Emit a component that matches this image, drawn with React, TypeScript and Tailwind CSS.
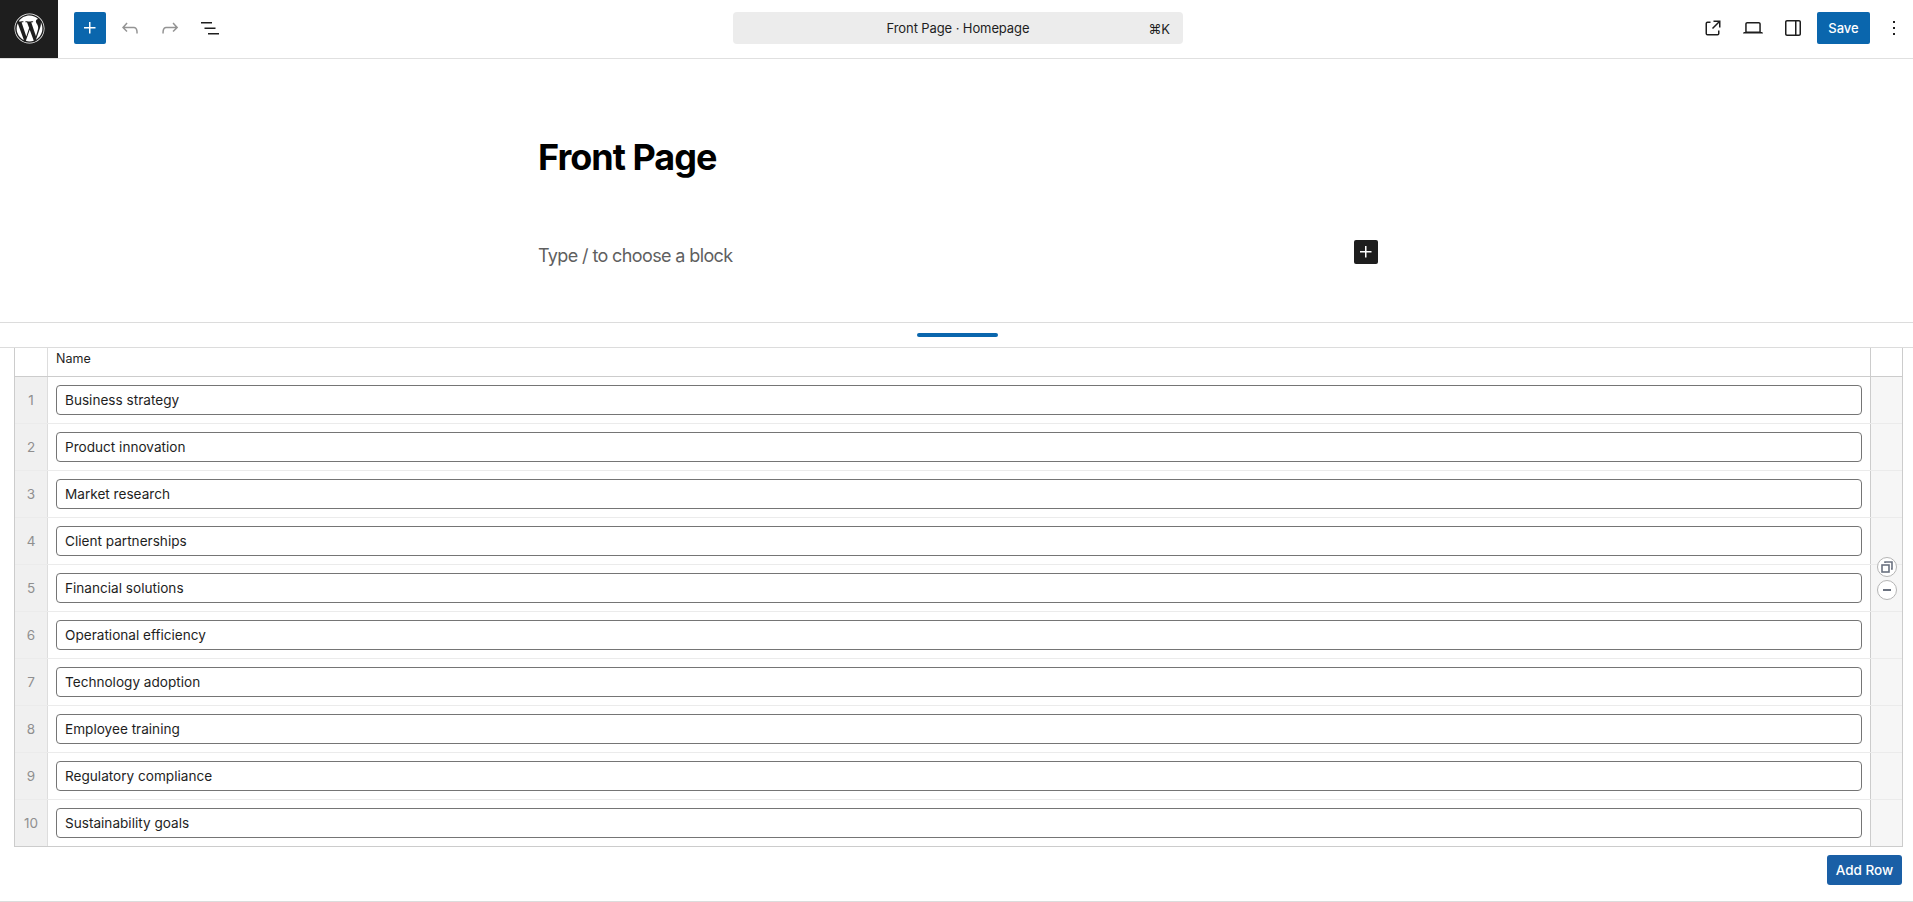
import React from "react";
import { FaWordpress } from "react-icons/fa";

const I = ({ d, className = "" }: { d: string; className?: string }) => (
  <svg viewBox="0 0 24 24" width="24" height="24" fill="currentColor" className={className}>
    <path d={d} />
  </svg>
);

const plus = "M11 12.5V17.5H12.5V12.5H17.5V11H12.5V6H11V11H6V12.5H11Z";
const undo = "M18.3 11.7c-.6-.6-1.4-.9-2.3-.9H6.7l2.9-3.3-1.1-1-4.5 5L8.5 16l1-1-2.7-2.7H16c.5 0 .9.2 1.3.5 1 1 1 3.4 1 4.5v.3h1.5v-.2c0-1.5 0-4.3-1.5-5.7z";
const redo = "M15.6 6.5l-1.1 1 2.9 3.3H8c-.9 0-1.7.3-2.3.9-1.4 1.5-1.4 4.2-1.4 5.6v.2h1.5v-.3c0-1.1 0-3.5 1-4.5.3-.3.7-.5 1.3-.5h9.2L14.5 15l1.1 1.1 4.6-4.6-4.6-5z";
const listView = "M3 6h11v1.5H3V6Zm3.5 5.5h11V13h-11v-1.5ZM21 17H10v1.5h11V17Z";
const external = "M19.5 4.5h-7V6h4.44l-5.97 5.97 1.06 1.06L18 7.06v4.44h1.5v-7Zm-13 1a2 2 0 0 0-2 2v10a2 2 0 0 0 2 2h10a2 2 0 0 0 2-2v-3H17v3a.5.5 0 0 1-.5.5h-10a.5.5 0 0 1-.5-.5v-10a.5.5 0 0 1 .5-.5h3V5.5h-3Z";
const laptop = "M20.5 16h-.7V8c0-1.1-.9-2-2-2H6.2c-1.1 0-2 .9-2 2v8h-.7c-.8 0-1.5.7-1.5 1.5h20c0-.8-.7-1.5-1.5-1.5zM5.7 8c0-.3.2-.5.5-.5h11.6c.3 0 .5.2.5.5v7.6H5.7V8z";
const sidebar = "M18 4H6c-1.1 0-2 .9-2 2v12c0 1.1.9 2 2 2h12c1.1 0 2-.9 2-2V6c0-1.1-.9-2-2-2zm-4 14.5H6c-.3 0-.5-.2-.5-.5V6c0-.3.2-.5.5-.5h8v13zm4.5-.5c0 .3-.2.5-.5.5h-2.5v-13H18c.3 0 .5.2.5.5v12z";
const more = "M13 19h-2v-2h2v2zm0-6h-2v-2h2v2zm0-6h-2V5h2v2z";

const rows = [
  "Business strategy",
  "Product innovation",
  "Market research",
  "Client partnerships",
  "Financial solutions",
  "Operational efficiency",
  "Technology adoption",
  "Employee training",
  "Regulatory compliance",
  "Sustainability goals",
];

export default function App() {
  return (
    <div className="h-[902px] w-[1913px] overflow-hidden bg-white font-['Inter',sans-serif] text-[#1e1e1e] flex flex-col">
      <header className="h-[59px] shrink-0 flex items-center pb-[2px] border-b border-[#e0e0e0]">
        <div className="w-[58px] h-[58px] -mb-[2px] pb-[2px] bg-[#1e1e1e] flex items-center justify-center text-white self-start">
          <FaWordpress size={31} />
        </div>
        <div className="w-[16px]" />
        <div className="w-[32px] h-[32px] rounded-[2px] bg-[#0a66ad] text-white flex items-center justify-center">
          <I d={plus} />
        </div>
        <div className="flex items-center gap-[8px] ml-[8px] text-[#949494]">
          <div className="w-[32px] h-[32px] flex items-center justify-center"><I d={undo} /></div>
          <div className="w-[32px] h-[32px] flex items-center justify-center"><I d={redo} /></div>
          <div className="w-[32px] h-[32px] flex items-center justify-center text-[#1e1e1e]"><I d={listView} /></div>
        </div>
        <div className="ml-[507px] w-[450px] h-[32px] pt-[1px] rounded-[4px] bg-[#ececec] flex items-center text-[13px] tracking-[-0.1px] relative">
          <span className="w-full text-center">Front Page · Homepage</span>
          <span className="absolute right-[13px] top-[8px]">⌘K</span>
        </div>
        <div className="ml-auto flex items-center gap-[8px]">
          <div className="w-[32px] h-[32px] flex items-center justify-center"><I d={external} /></div>
          <div className="w-[32px] h-[32px] flex items-center justify-center"><I d={laptop} /></div>
          <div className="w-[32px] h-[32px] flex items-center justify-center"><I d={sidebar} /></div>
        </div>
        <div className="ml-[8px] w-[53px] h-[32px] pt-[1px] rounded-[2px] bg-[#0a66ad] text-white text-[13px] font-medium flex items-center justify-center">Save</div>
        <div className="ml-[10px] mr-[5px] w-[28px] h-[32px] flex items-center justify-center"><I d={more} /></div>
      </header>

      <main className="h-[264px] shrink-0 border-b border-[#dcdcdc] pl-[538px]">
        <h1 className="mt-[75px] text-[36px] leading-[46px] font-bold tracking-[-1px] text-black">Front Page</h1>
        <div className="mt-[60px] w-[840px] h-[30px] flex items-center justify-between">
          <span className="text-[18px] tracking-[-0.62px] text-[#5f5f5f]">Type / to choose a block</span>
          <span className="w-[24px] h-[24px] rounded-[2px] bg-[#1e1e1e] text-white flex items-center justify-center -mt-[6px]">
            <svg viewBox="0 0 24 24" width="24" height="24" fill="currentColor"><path d={plus} /></svg>
          </span>
        </div>
      </main>

      <div className="h-[25px] shrink-0 border-b border-[#dcdcdc] flex items-center justify-center">
        <div className="w-[81px] h-[4px] rounded-[2px] bg-[#0a66ad] -mt-[1px] ml-[1px]" />
      </div>

      <section className="ml-[14px] mr-[10px] border-x border-b border-[#ccc]">
        <div className="h-[29px] flex border-b border-[#ccc]">
          <div className="w-[33px] border-r border-[#ddd]" />
          <div className="flex-1 px-[8px] text-[12.5px] leading-[22px]">Name</div>
          <div className="w-[32px] border-l border-[#ccc]" />
        </div>
        {rows.map((r, i) => (
          <div key={r} className={`flex ${i < 9 ? "h-[47px] border-b border-[#ebebeb]" : "h-[46px]"}`}>
            <div className="w-[33px] bg-[#f0f0f0] border-r border-[#ddd] flex items-center justify-center text-[13.5px] text-[#8f8f8f]">{i + 1}</div>
            <div className="flex-1 flex items-center px-[8px]">
              <div className="w-full h-[30px] rounded-[4px] border border-[#757575] px-[8px] flex items-center text-[13.6px]">{r}</div>
            </div>
            <div className="w-[32px] bg-[#f6f6f6] border-l border-[#ccc] relative">
              {i === 4 && (
                <div className="absolute left-[6px] -top-[8px] flex flex-col gap-[3px] z-10">
                  <div className="w-[20px] h-[20px] rounded-full border border-[#b5b5b5] bg-white flex items-center justify-center text-[#6b7280]">
                    <svg viewBox="0 0 12 12" width="12" height="12" fill="none" stroke="currentColor" strokeWidth="1.6"><rect x="1" y="4" width="7" height="7" /><path d="M4 2V1h7v7h-1" /></svg>
                  </div>
                  <div className="w-[20px] h-[20px] rounded-full border border-[#b5b5b5] bg-white flex items-center justify-center">
                    <div className="w-[8px] h-[2px] bg-[#6b7280]" />
                  </div>
                </div>
              )}
            </div>
          </div>
        ))}
      </section>

      <div className="flex justify-end pr-[11px] pt-[8px] h-[55px] border-b border-[#dcdcdc] shrink-0">
        <div className="w-[75px] h-[30px] pt-[1px] rounded-[3px] bg-[#1a5fa6] text-white text-[13.5px] font-medium flex items-center justify-center">Add Row</div>
      </div>
    </div>
  );
}
